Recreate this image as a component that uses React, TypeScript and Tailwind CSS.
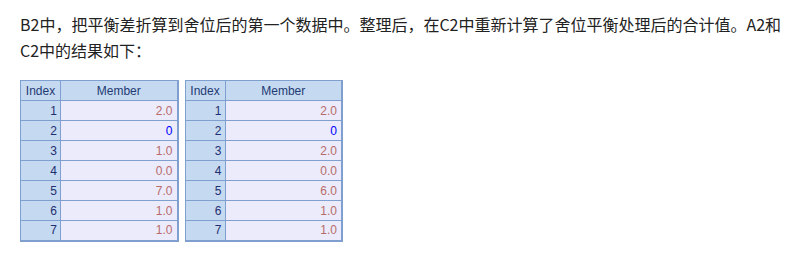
import React from "react";

type Cell = { v: string; blue?: boolean };

const left: Cell[] = [
  { v: "2.0" },
  { v: "0", blue: true },
  { v: "1.0" },
  { v: "0.0" },
  { v: "7.0" },
  { v: "1.0" },
  { v: "1.0" },
];
const right: Cell[] = [
  { v: "2.0" },
  { v: "0", blue: true },
  { v: "2.0" },
  { v: "0.0" },
  { v: "6.0" },
  { v: "1.0" },
  { v: "1.0" },
];

function DataTable({ rows }: { rows: Cell[] }) {
  return (
    <table
      className="border-collapse border-r-2 border-b-2 border-[#7f9fcf] text-[12px] leading-none"
      style={{ fontFamily: '"Liberation Sans", Arial, sans-serif' }}
    >
      <thead>
        <tr className="h-[20px] bg-[#c5d9f1] text-[#1f3b73]">
          <th className="w-[40px] border border-[#7f9fcf] px-[3px] text-center font-normal">Index</th>
          <th className="w-[117px] border border-[#7f9fcf] px-[3px] text-center font-normal">Member</th>
        </tr>
      </thead>
      <tbody>
        {rows.map((r, i) => (
          <tr key={i} className="h-[20px]">
            <td className="border border-[#7f9fcf] bg-[#c5d9f1] px-[3px] text-right text-[#1f2f6f]">{i + 1}</td>
            <td
              className={
                "border border-[#7f9fcf] bg-[#ebebfb] px-[4px] text-right " +
                (r.blue ? "text-[#0000ff]" : "text-[#b86b6b]")
              }
            >
              {r.v}
            </td>
          </tr>
        ))}
      </tbody>
    </table>
  );
}

export default function App() {
  return (
    <div className="w-[806px] h-[264px] bg-white px-[20px] pt-[11px]">
      <p
        className="w-[766px] text-[16px] leading-[26px] text-[#222222]"
        style={{ fontFamily: '"Noto Sans CJK SC", "Noto Sans", sans-serif' }}
      >
        B2中，把平衡差折算到舍位后的第一个数据中。整理后，在C2中重新计算了舍位平衡处理后的合计值。A2和
        <br />
        C2中的结果如下：
      </p>
      <div className="mt-[17px] flex gap-[6px]">
        <DataTable rows={left} />
        <DataTable rows={right} />
      </div>
    </div>
  );
}
